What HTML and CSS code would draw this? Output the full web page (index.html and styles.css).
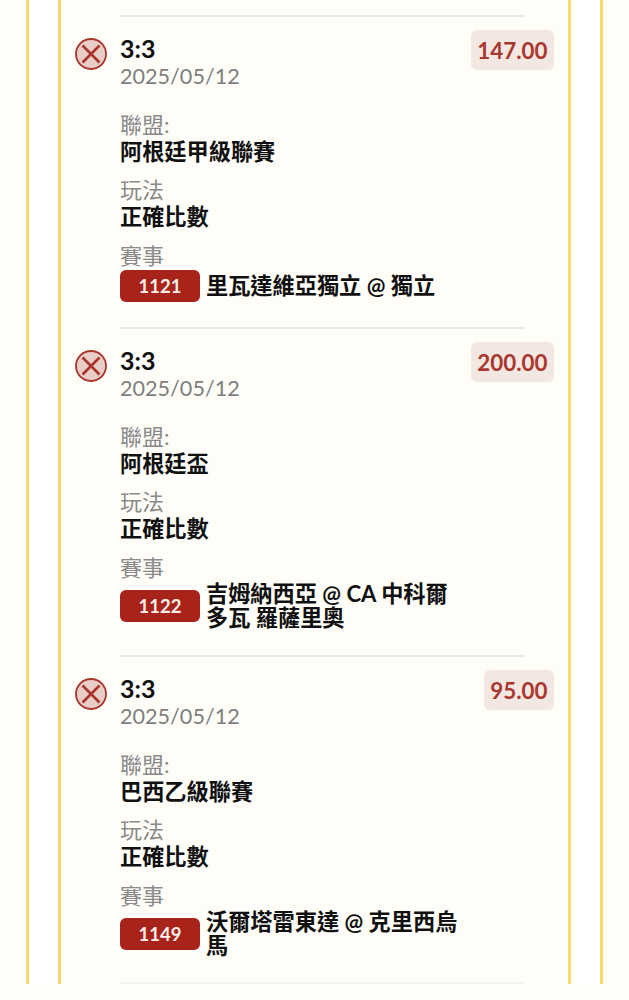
FILE: index.html
```html
<!DOCTYPE html>
<html>
  <head>
    <meta charset="utf-8">
    <title>Bet Records</title>
    <link rel="stylesheet" href="styles.css">
  </head>
  <body>
    <div class="outer">
      <div class="inner">
        <div class="record">
          <svg class="status-icon" viewBox="0 0 32 32"><circle cx="16" cy="16" r="15"/><path d="M7.5 7.5 24.5 24.5M24.5 7.5 7.5 24.5"/></svg>
          <div class="record-body">
            <div class="score">3:3</div>
            <div class="date">2025/05/12</div>
            <div class="label league-label">聯盟:</div>
            <div class="value">阿根廷甲級聯賽</div>
            <div class="label">玩法</div>
            <div class="value">正確比數</div>
            <div class="label match-label">賽事</div>
            <div class="match">
              <span class="match-no">1121</span>
              <span class="match-name">里瓦達維亞獨立 @ 獨立</span>
            </div>
          </div>
          <div class="amount">147.00</div>
        </div>
        <div class="record">
          <svg class="status-icon" viewBox="0 0 32 32"><circle cx="16" cy="16" r="15"/><path d="M7.5 7.5 24.5 24.5M24.5 7.5 7.5 24.5"/></svg>
          <div class="record-body">
            <div class="score">3:3</div>
            <div class="date">2025/05/12</div>
            <div class="label league-label">聯盟:</div>
            <div class="value">阿根廷盃</div>
            <div class="label">玩法</div>
            <div class="value">正確比數</div>
            <div class="label match-label">賽事</div>
            <div class="match">
              <span class="match-no">1122</span>
              <span class="match-name">吉姆納西亞 @ CA 中科爾多瓦 羅薩里奧</span>
            </div>
          </div>
          <div class="amount">200.00</div>
        </div>
        <div class="record">
          <svg class="status-icon" viewBox="0 0 32 32"><circle cx="16" cy="16" r="15"/><path d="M7.5 7.5 24.5 24.5M24.5 7.5 7.5 24.5"/></svg>
          <div class="record-body">
            <div class="score">3:3</div>
            <div class="date">2025/05/12</div>
            <div class="label league-label">聯盟:</div>
            <div class="value">巴西乙級聯賽</div>
            <div class="label">玩法</div>
            <div class="value">正確比數</div>
            <div class="label match-label">賽事</div>
            <div class="match">
              <span class="match-no">1149</span>
              <span class="match-name">沃爾塔雷東達 @ 克里西烏馬</span>
            </div>
          </div>
          <div class="amount">95.00</div>
        </div>
      </div>
    </div>
  </body>
</html>
```

FILE: styles.css
```css
html {
  background-color: #fefdf8;
}
body {
  margin: 0;
  padding: 0 26px 16px;
  background-color: #fefdf8;
  font-family: Lato, "Noto Sans CJK TC", sans-serif;
  height: 1000px;
  box-sizing: border-box;
  overflow: hidden;
}
.outer {
  height: 984px;
  padding: 0 29px;
  border-left: 3px solid #f4da72;
  border-right: 3px solid #f4da72;
  background-color: #fff;
}
.inner {
  height: 984px;
  box-sizing: border-box;
  padding-top: 15px;
  border-left: 3px solid #f4da72;
  border-right: 3px solid #f4da72;
  background-color: #fefdf8;
}
.record {
  position: relative;
  display: flex;
  margin: 0 43px 0 59px;
  padding-top: 18px;
  padding-bottom: 25px;
  border-top: 2px solid #e9e8e3;
}
.record:last-child {
  padding-bottom: 24px;
  border-bottom: 2px solid #f3f2ed;
}
.status-icon {
  position: absolute;
  left: -45px;
  top: 21px;
  width: 32px;
  height: 32px;
}
.status-icon circle {
  fill: #ebcdc8;
  stroke: #a8352c;
  stroke-width: 1.8;
}
.status-icon path {
  fill: none;
  stroke: #a8352c;
  stroke-width: 2.6;
}
.record-body {
  flex: 1;
  min-width: 0;
}
.score {
  margin-bottom: 1px;
  font-size: 25px;
  font-weight: 700;
  line-height: 27px;
  color: #111;
}
.date {
  font-size: 21.6px;
  line-height: 26px;
  color: #7f7f7f;
}
.label {
  margin-top: 11px;
  font-size: 22px;
  line-height: 28px;
  color: #8a8a8a;
}
.league-label {
  margin-top: 22px;
}
.match-label {
  margin-top: 12px;
}
.value {
  font-size: 22.2px;
  font-weight: 700;
  line-height: 26px;
  color: #111;
}
.match {
  display: flex;
  align-items: center;
  gap: 6px;
  max-width: 340px;
}
.match-no {
  flex: none;
  width: 80px;
  height: 32px;
  line-height: 32px;
  border-radius: 6px;
  text-align: center;
  font-size: 18.5px;
  font-weight: 700;
  color: #fbeeea;
  background-color: #a8231a;
}
.match-name {
  font-size: 22.2px;
  font-weight: 700;
  line-height: 24px;
  color: #111;
}
.amount {
  position: absolute;
  right: -29px;
  top: 13px;
  padding: 0 6.5px;
  height: 40px;
  line-height: 41px;
  border-radius: 6px;
  font-size: 22.4px;
  font-weight: 700;
  color: #a8372f;
  background-color: #f3e7e1;
}
```
